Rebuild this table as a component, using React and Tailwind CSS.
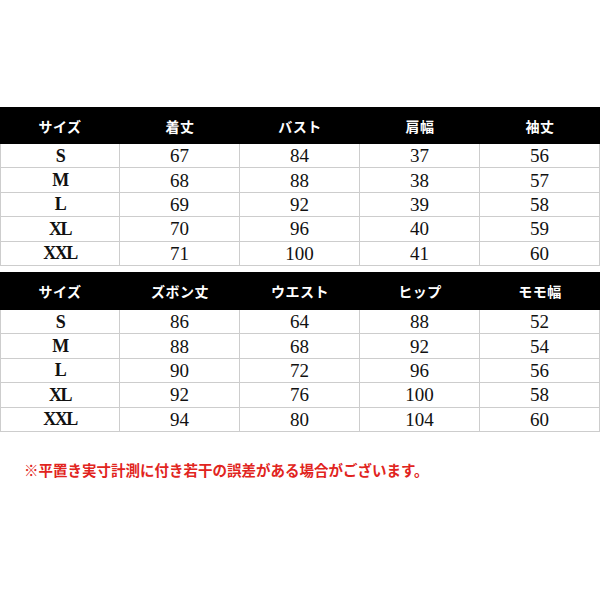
import React from "react";

const jp = { fontFamily: '"Noto Sans CJK JP", "Noto Sans", sans-serif' };
const serif = { fontFamily: '"Liberation Serif", "Times New Roman", serif' };

const topTable = {
  head: ["サイズ", "着丈", "バスト", "肩幅", "袖丈"],
  rows: [
    ["S", "67", "84", "37", "56"],
    ["M", "68", "88", "38", "57"],
    ["L", "69", "92", "39", "58"],
    ["XL", "70", "96", "40", "59"],
    ["XXL", "71", "100", "41", "60"],
  ],
};

const bottomTable = {
  head: ["サイズ", "ズボン丈", "ウエスト", "ヒップ", "モモ幅"],
  rows: [
    ["S", "86", "64", "88", "52"],
    ["M", "88", "68", "92", "54"],
    ["L", "90", "72", "96", "56"],
    ["XL", "92", "76", "100", "58"],
    ["XXL", "94", "80", "104", "60"],
  ],
};

const SizeTable = ({ data, headH }) => {
  return (
    <div className="w-full">
      {/* black header */}
      <div
        className={`grid grid-cols-5 bg-black text-white ${headH}`}
        style={jp}
      >
        {data.head.map((h) => (
          <div
            key={h}
            className="flex items-center justify-center text-[14px] leading-none font-bold tracking-[0.5px]"
          >
            {h}
          </div>
        ))}
      </div>

      {/* body rows */}
      {data.rows.map((row, i) => (
        <div
          key={i}
          className="grid grid-cols-5 h-[24.4px] border-b border-[#cdcdcd] leading-none"
          style={serif}
        >
          {row.map((cell, j) => (
            <div
              key={j}
              className={`flex items-center justify-center border-r border-[#cdcdcd] text-[#111] ${
                j === 0
                  ? "border-l text-[18px] font-bold tracking-[-1.5px]"
                  : "text-[19px]"
              }`}
            >
              {cell}
            </div>
          ))}
        </div>
      ))}
    </div>
  );
};

const App = () => {
  return (
    <div className="w-[600px] h-[600px] bg-white overflow-hidden">
      <div className="pt-[107px]">
        <SizeTable data={topTable} headH="h-[37px]" />
        <div className="mt-[6px]">
          <SizeTable data={bottomTable} headH="h-[38px]" />
        </div>
        <p
          className="mt-[28px] pl-[24px] text-[14.5px] leading-[20px] font-bold text-[#e12420]"
          style={jp}
        >
          ※平置き実寸計測に付き若干の誤差がある場合がございます。
        </p>
      </div>
    </div>
  );
};

export default App;
